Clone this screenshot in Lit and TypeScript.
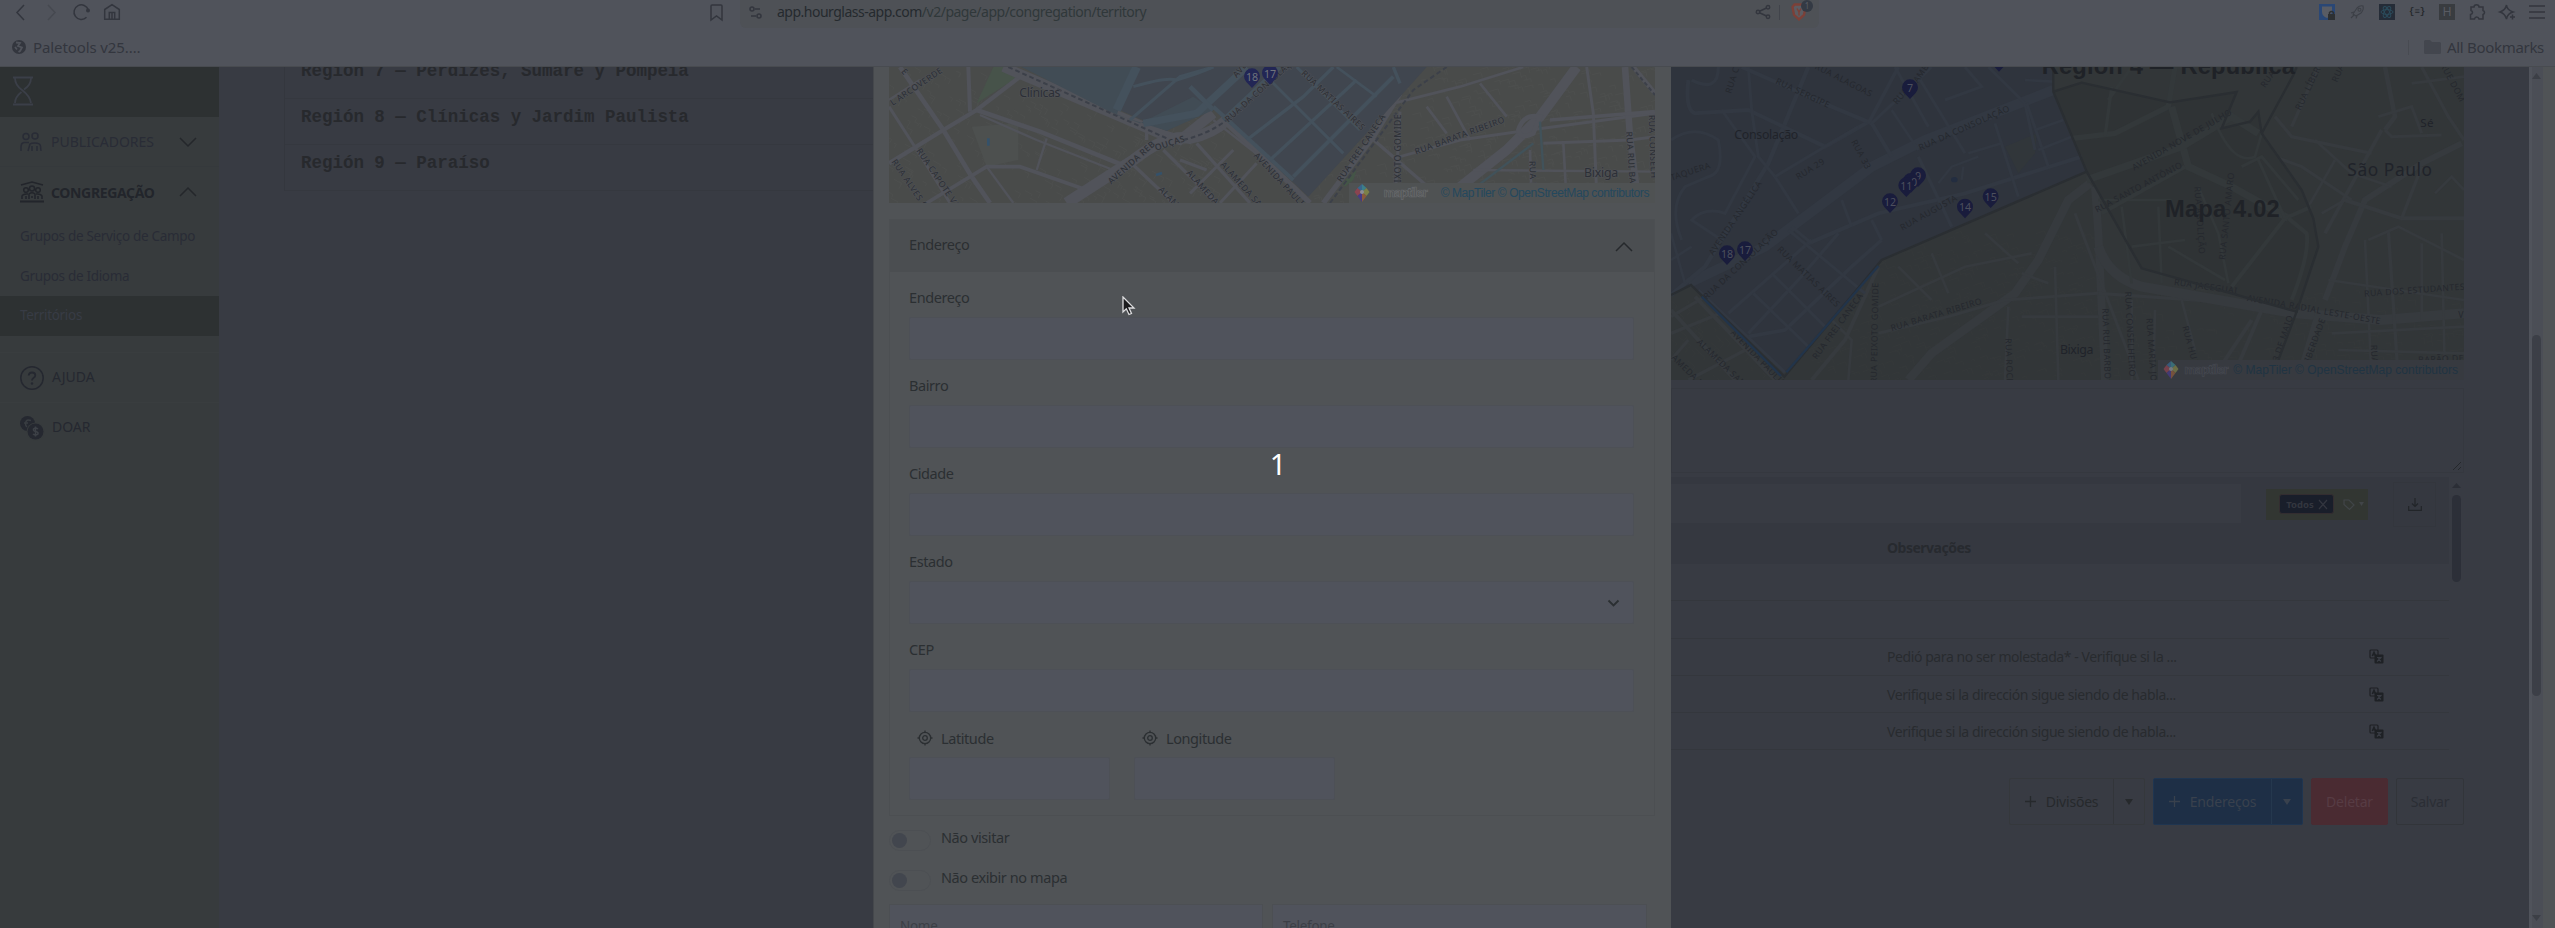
import { LitElement, html, svg, css } from "lit";
import { customElement } from "lit/decorators.js";

type Label = [string, number, number, number, number?];
type Road = [string, number];

const pin = (n: string, x: number, y: number) => svg`
  <g transform="translate(${x} ${y})">
    <path class="pin" d="M0 32 L-17 14 A24 24 0 1 1 17 14 Z"/>
    ${n ? svg`<text class="num" x="0" y="11" text-anchor="middle">${n}</text>` : ""}
  </g>`;

const label = ([t, x, y, r, s]: Label) => svg`
  <text class="street" font-size=${s ?? 26} transform="translate(${x} ${y}) rotate(${r})">${t}</text>`;

const road = ([d, w]: Road) => svg`<path class="road" d=${d} stroke-width=${w} />`;

function blocks(seed: number, x0: number, y0: number, x1: number, y1: number, n: number, a: number) {
  let s = seed;
  const rnd = () => ((s = (s * 16807) % 2147483647) / 2147483647);
  let d = "";
  const c = Math.cos(a), q = Math.sin(a);
  for (let i = 0; i < n; i++) {
    const x = x0 + rnd() * (x1 - x0), y = y0 + rnd() * (y1 - y0);
    const w = 8 + rnd() * 20, h = 6 + rnd() * 14;
    d += `M${x.toFixed(0)} ${y.toFixed(0)}l${(w * c).toFixed(0)} ${(w * q).toFixed(0)} ${(-h * q).toFixed(0)} ${(h * c).toFixed(0)}`;
  }
  return d;
}

const mapLogo = svg`
  <path d="M8 0 L3.500 4 L8 8 Z" fill="#39658c"/><path d="M8 0 L12.500 4 L8 8 Z" fill="#3c7f8a"/>
  <path d="M3.500 4 L0.500 8 L3.500 12 L8 8 Z" fill="#8a4450"/><path d="M12.500 4 L15.500 8 L12.500 12 L8 8 Z" fill="#7d8048"/>
  <path d="M3.500 12 L8 18 L8 8 Z" fill="#473a86"/><path d="M12.500 12 L8 18 L8 8 Z" fill="#8a5a3c"/><circle cx="8" cy="8" r="2" fill="#8b8d94"/>`;

@customElement("map-attribution")
class MapAttribution extends LitElement {
  static styles = css`
    :host { display: flex; align-items: center; justify-content: space-between; height: 20px; padding: 0 6px 1px 5px; box-sizing: border-box;
      font: 12px "Liberation Sans", Arial, sans-serif; color: var(--link); background: var(--attr-bg); white-space: nowrap; }
    svg { flex: none; width: 16px; height: 18px; opacity: var(--logo-op, 1); }
    .brand { font: bold 12.500px Inter, sans-serif; letter-spacing: -0.9px; color: var(--attr-bg); -webkit-text-stroke: 0.7px var(--brand); }
  `;
  render() {
    return html`<svg viewBox="0 0 16 18">${mapLogo}</svg><span class="brand">maptiler</span>
      <span>© MapTiler © OpenStreetMap contributors</span>`;
  }
}

@customElement("address-map")
class AddressMap extends LitElement {
  static styles = css`
    :host { display: block; position: relative; height: 136px; }
    svg { display: block; width: 100%; height: 100%; }
    .road { fill: none; stroke: #51535a; }
    .blue .road { stroke: #44515c; }
    .bld { fill: none; stroke: #4d4f4e; stroke-width: 3; }
    .street { font-family: "Noto Sans", sans-serif; font-weight: 500; fill: #2e3138; stroke: #505257; stroke-width: 3; paint-order: stroke; letter-spacing: 1.2px; }
    .place { font-family: "Noto Sans", sans-serif; fill: #2c2f36; stroke: #505257; stroke-width: 3; paint-order: stroke; }
    .pin { fill: #222655; } .num { font: 32px "Noto Sans", sans-serif; fill: #70737c; }
    map-attribution { position: absolute; right: 0; bottom: 0; width: 306px; --link: #24485e; --attr-bg: #4f5253; --brand: #67696c; }
  `;
  render() {
    const roads: Road[] = [
      ["M27 140 L130 300 L210 429", 9], ["M60 21 L190 210 L275 350 L330 429", 14], ["M27 310 L190 210 L290 150 L420 50", 13],
      ["M265 21 L270 155", 12], ["M120 60 L27 120", 8], ["M290 150 L480 215 L740 320", 14], ["M300 165 L470 240 L700 330", 7],
      ["M140 429 L320 320 L420 320 L620 390", 11], ["M320 320 L400 429", 7], ["M500 235 L470 330", 7], ["M800 240 L800 195", 10],
      ["M370 21 L850 225 L900 240 L1000 160", 30], ["M560 429 L760 300 Q860 220 930 235 Q1000 220 1040 180", 34],
      ["M760 315 L880 429", 10], ["M850 270 L1010 429", 10], ["M950 250 L1110 429", 10], ["M1040 190 L1290 429", 16],
      ["M1060 270 L930 400 M1130 310 L1020 429 M980 330 L900 300", 9], ["M1000 180 L1140 290 L1260 400", 7],
      ["M1560 100 L1480 230 L1330 429", 16], ["M1470 230 L1620 360 L1700 429", 10], ["M1560 155 L1545 429", 9],
      ["M1540 130 L1740 80 L1930 21", 8], ["M1560 290 L1740 240 L1950 210 L2325 160", 9], ["M1700 110 L1770 240 M1800 70 L1880 170 M1640 140 L1700 220", 8],
      ["M2090 21 L1980 170 L1880 270 L1680 429", 30], ["M1980 170 Q1930 160 1915 210 Q1920 240 1960 220 Z", 14],
      ["M2235 21 L2250 230 L2275 429", 20], ["M2120 21 L2140 160 L2150 400", 9], ["M2010 180 L2325 155", 11], ["M1990 250 L2250 240 L2325 230", 9],
      ["M1950 270 L1955 429 M2050 250 L2060 429", 8], ["M1780 330 L2325 335", 7], ["M2260 21 L2325 100", 14],
    ];
    const inner: Road[] = [
      ["M770 21 L710 150", 26], ["M750 180 L900 50 L1000 21", 9], ["M760 80 Q860 50 890 60 Q960 40 1000 21", 9], ["M790 190 L950 160 L1100 21", 22],
      ["M930 80 L1000 150", 14], ["M1030 180 L1200 21", 14], ["M1000 140 L1240 360", 12], ["M1100 240 L1270 110 L1360 21", 10],
      ["M1170 300 L1430 60", 10], ["M1240 350 L1540 50", 12], ["M1160 50 L1390 280", 9], ["M1250 21 L1440 210", 9], ["M1370 21 L1490 110", 8], ["M1540 21 L1560 70", 10],
    ];
    const labels: Label[] = [
      ["L ARCOVERDE", 38, 138, -34], ["E", 62, 35, 50], ["RUA ALVES GUIM", 34, 305, 56], ["RUA CAPOTE VALENTE", 108, 272, 56],
      ["AVENIDA REB", 694, 374, -42], ["OUÇAS", 828, 272, -18], ["ALAMEDA L", 918, 340, 48], ["ALAMEDA SANTOS", 1020, 315, 48], ["ALAM", 834, 390, 46],
      ["AVENIDA PAULISTA", 1120, 288, 47], ["RUA DA CONSOLAÇÃO", 1045, 188, -42], ["AVE", 1070, 55, -50], ["RUA MATIAS AIRES", 1262, 42, 43],
      ["RUA FREI CANECA", 1384, 368, -56], ["PEIXOTO GOMIDE", 1562, 400, -90], ["RUA BARATA RIBEIRO", 1608, 284, -20],
      ["RUA RUI BARBOSA", 2238, 215, 86], ["RUA CONSELH", 2306, 165, 88], ["RUA R", 1948, 303, 88],
    ];
    return html`
      <svg viewBox="27 21 2298 408" preserveAspectRatio="none">
        <rect x="27" y="21" width="2298" height="408" fill="#494b4a"/>
        <path class="bld" d=${blocks(7, 27, 21, 1040, 429, 330, 0.5)}/>
        <path class="bld" d=${blocks(91, 1300, 21, 2325, 429, 400, -0.25)}/>
        <path d="M290 130 L340 21 L390 21 L415 50 Z" fill="#47534a"/>
        <path d="M275 200 L415 190 L415 300 L320 320 Z" fill="#4d504f"/>
        <path d="M1385 370 L1430 330 L1420 360 L1395 380 Z" fill="#445547"/>
        ${roads.map(road)}
        <path d="M425 21 L1640 21 L1560 110 L1285 410 L1000 140 L860 212 Z" fill="#40464f"/>
        <path d="M425 21 L760 21 L710 165 L860 212 L1000 150 L940 110 L780 190 L690 155 Z" fill="#414c55"/>
        <g class="blue">${inner.map(road)}</g>
        <path d="M385 21 L860 235 M910 240 Q990 220 1040 180 M1350 429 L1600 90 L1700 21" stroke="#3c4049" stroke-width="6" stroke-dasharray="14 9" fill="none"/>
        <path d="M2255 21 L2325 105" stroke="#3c4049" stroke-width="6" stroke-dasharray="12 8" fill="none"/>
        <path d="M1980 185 L1990 330 M1960 250 L1750 410" stroke="#41525a" stroke-width="7" fill="none"/>
        <path d="M325 235 v22 M828 345 l18 -6" stroke="#34516a" stroke-width="8"/>
        ${labels.map(label)}
        <text class="place" x="418" y="110" font-size="37" textLength="123">Clínicas</text>
        <text class="place" x="2112" y="350" font-size="37" textLength="102">Bixiga</text>
        ${pin("18", 1116, 52)} ${pin("17", 1170, 42)}
      </svg>
      <map-attribution></map-attribution>`;
  }
}

@customElement("territory-map")
class TerritoryMap extends LitElement {
  static styles = css`
    :host { display: block; position: relative; height: 313px; }
    svg { display: block; width: 100%; height: 100%; }
    .road { fill: none; stroke: #363a3e; }
    .in .road { stroke: #323842; }
    .mid .road { stroke: #33383a; }
    .bld { fill: none; stroke: #35393a; stroke-width: 2.500; }
    .edge { fill: none; stroke: #2a2e32; stroke-width: 7; }
    .street { font-family: "Noto Sans", sans-serif; fill: #25282e; letter-spacing: 1.4px; }
    .place { font-family: "Noto Sans", sans-serif; fill: #20232a; }
    .big { font: bold 71px "Liberation Sans", Arial, sans-serif; fill: #1f2227; }
    .pin { fill: #191c3c; } .num { font: 32px "Noto Sans", sans-serif; fill: #4c4f5c; }
    map-attribution { position: absolute; right: 0; bottom: 0; width: 306px; --link: #203443; --attr-bg: #373a40; --brand: #454850; --logo-op: 0.75; }
  `;
  render() {
    const outside: Road[] = [
      ["M730 1140 L800 1060 L1050 880 L1120 780 L1210 600 L1275 550", 26], ["M1290 560 L1300 700 L1320 1140", 24],
      ["M18 950 L120 890 M18 1000 L190 930 M70 1140 L260 1040 M18 1080 L70 1020", 10], ["M90 890 L330 1140 M18 930 L210 1140", 12],
      ["M640 1000 L850 950 L1020 900 L1300 880", 9], ["M640 920 L900 800 L1100 760", 8], ["M700 800 L800 900 M800 760 L850 880 M960 700 L1060 790", 8],
      ["M1070 950 L1300 950 M1030 920 L1020 1140", 8], ["M1170 800 L1180 1140 M1070 820 L1150 850", 8], ["M440 1140 L540 1020 L640 800", 12],
      ["M500 960 L560 1020 L550 1140", 8], ["M1230 640 L1260 720 L1420 1140", 9], ["M1300 880 L1880 920", 10],
      ["M1300 740 Q1330 830 1430 860 L1890 940 L2150 960 L2397 940", 30], ["M1400 900 L1400 1140 M1470 930 L1465 1140 M1550 900 L1590 1050", 8],
      ["M1790 930 L1700 1140 M1640 1140 L1760 960", 12], ["M1960 940 L1900 1140", 20], ["M2390 430 L2270 490 L2100 600 L2040 740 L1980 900", 18],
      ["M2040 600 L2210 655 L2397 655", 12], ["M1800 460 L1910 500 L2060 600", 9], ["M1830 350 L1880 410 L2120 460", 10], ["M2160 201 L2190 350 L2160 390", 14],
      ["M2150 390 L2040 590 L1980 700", 11], ["M2160 390 L2180 410 L2330 405", 9], ["M2270 201 L2350 350 L2397 420", 10], ["M2240 250 L2397 230", 8],
      ["M1880 380 L1960 201", 10], ["M1950 420 L2060 520 L2180 560", 8], ["M2210 655 L2270 500 M2170 690 L2200 1140", 10], ["M2100 720 L2120 1140 M2270 730 L2270 960 M2330 700 L2340 1140", 8],
      ["M2110 720 L2200 680 L2397 780", 8], ["M1990 840 L2397 900 M2000 1000 L2397 980 M2020 1050 L2397 1060", 8], ["M1970 640 L2040 600 M2010 480 L1930 620", 8],
      ["M2140 350 L2240 320 L2270 400", 9], ["M2310 580 L2360 530 L2397 570", 8],
    ];
    const central: Road[] = [
      ["M1180 420 L1350 400 L1510 320 L1530 201", 16], ["M1520 320 L1570 500 L1700 560 L1870 655", 22], ["M1265 540 L1550 440 L1700 350 L1780 400", 22],
      ["M1330 300 L1400 201 M1340 260 L1320 410", 10], ["M1300 600 L1520 600 M1370 620 L1400 850", 8], ["M1480 620 L1490 850 M1600 560 L1660 700 L1690 850", 8],
      ["M1700 860 L1860 655 L1940 620", 12], ["M1780 480 L1860 655 M1730 500 L1790 470 L1900 600", 9], ["M1510 740 L1680 840 M1400 740 L1560 720", 8], ["M1560 500 L1310 640", 12],
      ["M1880 900 Q1935 760 1925 700 L1870 655", 12], ["M1640 340 Q1700 500 1770 470 L1790 400", 8],
    ];
    const inner: Road[] = [
      ["M70 850 L300 740 L620 500 L780 420 L1165 270", 30], ["M18 885 L120 800 L310 490 L430 201", 13], ["M430 730 L640 640 L900 580 L1250 470", 12],
      ["M650 720 L560 800 L360 990 L250 1010", 11], ["M100 870 L360 1117", 9], ["M190 940 L440 720", 10], ["M250 1000 L400 840 L520 700", 10], ["M265 880 L430 1040 M320 820 L480 980 M370 690 L600 880", 9],
      ["M18 420 Q90 370 160 420 Q180 520 130 530 L60 560 Q10 620 50 720", 9], ["M70 240 Q60 330 90 340 L250 330 L480 440 L620 360", 12], ["M80 240 Q160 280 160 201", 10], ["M170 330 L270 470 L180 640 Q120 620 80 660 L170 720", 9],
      ["M250 201 L260 330 L280 470 L330 530 L400 640", 9], ["M230 201 L500 320 L620 370 L680 470", 12], ["M330 530 L580 380", 9], ["M610 370 L700 201", 11], ["M620 370 L800 201", 9],
      ["M690 201 L790 380 M760 230 L900 460 M840 300 L950 260 L900 201", 9], ["M760 470 L860 680", 10], ["M970 201 L1080 310 L1110 450 M990 370 L1060 590", 9], ["M1085 310 L1150 500", 9],
      ["M1080 240 L1165 245", 8], ["M1110 390 L1195 360 M1120 450 L1220 410", 8], ["M530 600 L560 680 M620 660 L650 720 M380 680 L440 730", 9], ["M680 330 L760 450 M910 460 L1010 430", 8], ["M820 550 L860 500 L940 470 M895 500 L890 540", 7],
      ["M18 700 L60 850 M18 780 L80 740", 8],
    ];
    const labels: Label[] = [
      ["RUA CUBA", 198, 282, -72], ["RUA ALAGOAS", 448, 205, 27], ["RUA SERGIPE", 330, 250, 25], ["RUA", 696, 315, -50], ["AMBI", 758, 250, -55], ["RUA DA CONSOLAÇÃO", 766, 452, -24],
      ["RUA 29", 400, 540, -32], ["RUA 33", 558, 425, 62], ["TAQUERA", 20, 542, -18], ["AVENIDA ANGÉLICA", 145, 768, -56], ["RUA DA CONSOLAÇÃO", 125, 900, -43],
      ["RUA MATIAS AIRES", 335, 750, 44], ["RUA AUGUSTA", 712, 692, -29], ["RUA FREI CANECA", 455, 1080, -54], ["RUA PEIXOTO GOMIDE", 635, 1150, -89], ["RUA BARATA RIBEIRO", 680, 994, -17],
      ["ALAMEDA SANTOS", 94, 1028, 44], ["AMEDA LORENA", 18, 1075, 44], ["AVENIDA PAULISTA", 196, 1000, 46], ["RUA ROCHA", 1021, 1015, 88], ["RUA RUI BARBOSA", 1312, 925, 88],
      ["RUA CONSELHEIRO R", 1380, 875, 87], ["RUA MARIA JO", 1444, 955, 86], ["RUA HUMA", 1552, 980, 75], ["AVENIDA NOVE DE JULHO", 1408, 512, -30], ["RUA SANTO ANTÔNIO", 1296, 638, -28],
      ["RUA JACEGUAI", 1526, 855, 8], ["AVENIDA RADIAL LESTE-OESTE", 1745, 902, 10], ["RUA DOS ESTUDANTES", 2098, 890, -4], ["RUA SANTO AMARO", 1680, 780, -84], ["RUA ABOLIÇÃO", 1588, 560, 86],
      ["RUA LÍBERO", 1906, 332, -64], ["RUA", 2016, 248, -66], ["RUA", 1800, 265, -55], ["RUE DOM", 2325, 195, 62], ["LIBERDADE", 1930, 1100, -70], ["3 DE MAIO", 1840, 1085, -72], ["RUA", 2117, 1035, 86], ["BARÃO DE", 2260, 1088, -2], ["V", 2380, 955, 0],
    ];
    return html`
      <svg viewBox="18 201 2379 939" preserveAspectRatio="none">
        <rect x="18" y="201" width="2379" height="939" fill="#323638"/>
        <path class="bld" d=${blocks(11, 430, 700, 1300, 1140, 420, -0.35)}/>
        <path class="bld" d=${blocks(23, 1300, 860, 2397, 1140, 230, -0.1)}/>
        <path class="bld" d=${blocks(5, 18, 880, 330, 1140, 70, 0.7)}/>
        ${outside.map(road)}
        <path d="M1165 275 L1250 248 L1515 307 L1715 276 L1670 385 L1755 365 L1780 335 L1790 400 L1910 570 L1945 655 L1960 740 L1895 935 L1430 805 L1265 515 Z" fill="#2f3335"/>
        <g class="mid">${central.map(road)}</g>
        <path d="M18 201 H1165 V275 L1265 515 L650 780 L358 1117 L78 855 L18 885 Z" fill="#2f343d"/>
        <path d="M1020 440 L1115 400 L1110 460 L1060 520 Z" fill="#31363a"/>
        <g class="in">${inner.map(road)}</g>
        <ellipse cx="868" cy="539" rx="10" ry="8" fill="#232d40"/>
        ${labels.map(label)}
        <path class="edge" d="M18 885 L78 855 L358 1130 L650 780 L1265 515 L1165 275 V201"/>
        <path class="edge" d="M1165 275 L1250 248 L1515 307 L1715 276 L1670 385 L1755 365 L1780 335 L1790 400 L1910 570 L1945 655 L1960 740 L1895 935 L1430 805 L1265 515"/>
        <path class="edge" d="M1790 400 L1885 225 L1895 201 M1895 935 L1840 1080"/>
        <path d="M110 890 L348 1128 M364 1117 L640 798" stroke="#22344a" stroke-width="7" fill="none"/>
        <text class="place" x="208" y="416" font-size="37" textLength="192">Consolação</text>
        <text class="place" x="1185" y="1061" font-size="37" textLength="100">Bixiga</text>
        <text class="place" x="2266" y="381" font-size="35" textLength="40">Sé</text>
        <text class="place" x="2047" y="529" font-size="52" textLength="254">São Paulo</text>
        <text class="big" x="1500" y="651" textLength="344">Mapa 4.02</text>
        <text class="big" x="1130" y="222" textLength="760">Región 4 — República</text>
        ${pin("7", 735, 265)} ${pin("", 1002, 183)} ${pin("9", 759, 529)} ${pin("10", 738, 546)} ${pin("11", 724, 559)} ${pin("12", 675, 607)}
        ${pin("14", 900, 623)} ${pin("15", 977, 592)} ${pin("17", 240, 751)} ${pin("18", 186, 763)}
      </svg>
      <map-attribution></map-attribution>`;
  }
}

const icon = (w: number, h: number, body: unknown, cls = "") =>
  html`<svg class="ic ${cls}" width=${w} height=${h} viewBox="0 0 ${w} ${h}">${body}</svg>`;
const chevron = (up: boolean) => icon(18, 10, svg`<path d=${up ? "M1 9 L9 1 L17 9" : "M1 1 L9 9 L17 1"}/>`, "chev");
const caret = icon(8, 6, svg`<path class="f" d="M0 0H8L4 6Z"/>`, "caret");
const plus = icon(11, 11, svg`<path d="M5.500 0V11M0 5.500H11"/>`, "plus");
const target = icon(16, 16, svg`<circle cx="8" cy="8" r="5.700"/><circle cx="8" cy="8" r="2.300"/><path d="M8 .5V3M8 13V15.500M.5 8H3M13 8H15.500"/>`, "target");
const translate = icon(15, 15, svg`<rect x="1" y="1" width="8" height="8" rx="1"/><rect class="f" x="5.500" y="5.500" width="9" height="9" rx="1"/><path d="M3.200 7L5 3L6.800 7M3.800 5.800H6.200"/><path class="cut" d="M8 12.500L12.500 8M8 8.500H12.500M9 9.500L12 12.500"/>`, "trans");

@customElement("app-root")
class AppRoot extends LitElement {
  static styles = css`
    :host { display: grid; grid-template-rows: 67px 861px; width: 2555px; height: 928px; overflow: hidden; position: relative;
      background: #383b43; font-family: "Noto Sans", "Open Sans", sans-serif; font-size: 14px; color: #2a2d33; }
    * { box-sizing: border-box; }
    .ic { display: block; flex: none; fill: none; stroke: currentColor; stroke-width: 1.500; overflow: visible; }
    .f { fill: currentColor; stroke: none; }

    .chrome { display: grid; grid-template-rows: 28px 38px; background: #50535b; border-bottom: 1px solid #484b50; color: #33363e; }
    .bar { display: grid; grid-template-columns: 740px 1079px 1fr; }
    .nav { display: flex; align-items: center; padding: 0 17px 4px 16px; }
    .nav .back { margin-right: 22px; } .nav .fwd { margin-right: 17px; color: #464950; } .nav .rel { margin-right: 14px; }
    .nav .mark { margin-left: auto; }
    .url { display: flex; align-items: center; padding: 0 10px 4px 9px; background: #4e5156; border-radius: 0 0 6px 6px; }
    .url .addr { margin-left: 15px; font-size: 14px; letter-spacing: -0.5px; line-height: 20px; color: #30383a; }
    .url .addr b { font-weight: 400; color: #252a2e; }
    .url .share { margin-left: auto; margin-right: 9px; }
    .sep { width: 1px; height: 15px; background: #41444b; }
    .shield { position: relative; margin-left: 11px; margin-right: 2px; }
    .count { position: absolute; left: 10px; top: -3px; width: 12px; height: 12px; border-radius: 50%; background: #343a44; color: #595c64; font-size: 8px; line-height: 12px; text-align: center; }
    .ext { display: flex; align-items: center; justify-content: flex-end; gap: 14px; padding: 0 10px 4px 0; }
    .sq { width: 16px; height: 16px; display: grid; place-items: center; font: 12px "Liberation Sans", sans-serif; }
    .sq.h { background: #393c40; color: #585b62; } .sq.atom { background: #252c37; color: #2b4c5c; } .sq.br { font: bold 9px "Liberation Mono", monospace; color: #26292d; }
    .marks { display: flex; align-items: center; padding: 0 11px 0 12px; font-size: 15px; }
    .marks .pal { margin-left: 7px; letter-spacing: -0.1px; }
    .marks .line { margin-left: auto; width: 1px; height: 15px; background: #484b52; margin-right: 15px; }
    .marks .all { margin-left: 6px; letter-spacing: -0.3px; }

    .page { display: grid; grid-template-columns: 219px 1fr 26px; min-height: 0; overflow: hidden; }
    .side { background: #373b3d; color: #292c36; display: flex; flex-direction: column; }
    .logo { height: 50px; background: #2d3132; padding: 9px 12px; color: #3b3f48; }
    .top { display: flex; align-items: center; height: 50px; padding: 0 22px 0 20px; border-bottom: 1px solid #35393c; }
    .top span { margin-left: 9px; font-size: 14px; letter-spacing: 0; white-space: nowrap; padding-bottom: 1px; }
    .top .chev { margin-left: auto; color: #24272b; }
    .top.open { border: 0; color: #22252b; } .top.open span { margin-left: 7px; font-weight: 700; letter-spacing: -0.35px; padding-bottom: 0; }
    .sub { height: 39.500px; line-height: 38px; padding-left: 20px; font-size: 13.500px; letter-spacing: -0.32px; white-space: nowrap; }
    .sub.on { height: 40px; background: #2d3132; color: #383c45; margin-bottom: 16px; }
    .top.foot { border: 0; border-top: 1px solid #393d3f; color: #252830; } .top.foot span { margin-left: 8px; padding-bottom: 2px; }

    .content { display: grid; grid-template-columns: 1452px 793px; overflow: hidden; }
    .list { margin-left: 65px; height: 124px; border-left: 1px solid #34373e; display: grid; grid-template-rows: 32px 46px 46px; overflow: hidden;
      font: bold 17.500px "Liberation Mono", monospace; color: #27292d; }
    .list div { border-bottom: 1px solid #35383f; padding-left: 16px; display: flex; align-items: center; padding-bottom: 9px; white-space: nowrap; letter-spacing: -0.02px; }
    .list div:first-child { align-items: flex-end; padding-bottom: 17px; }

    .note { height: 85px; margin-top: 8px; border: 1px solid #35383f; display: flex; align-items: flex-end; justify-content: flex-end; padding: 2px; color: #25282c; }
    .scrollbox { display: grid; grid-template-columns: 778px 15px; height: 284px; margin-top: 4px; overflow: hidden; }
    .tools { display: flex; align-items: center; height: 54px; background: #353840; }
    .tools .search { width: 570px; height: 39px; background: #383b43; margin-top: -2px; }
    .tag { margin-left: 25px; width: 102px; height: 31px; background: #323632; display: flex; align-items: center; padding: 0 4px 0 13px; color: #414548; }
    .badge { width: 55px; height: 20px; border-radius: 3px; background: #191e2a; border: 1px solid #332d30; color: #33363f; display: flex; align-items: center; justify-content: center; gap: 5px; font-size: 9.500px; font-weight: 700; }
    .tag .tg { margin-left: 9px; } .tag .caret { margin-left: auto; }
    .down { margin-left: 25px; width: 43px; height: 45px; border: 1px solid #33363d; display: grid; place-items: center; color: #222529; }
    .head { height: 33px; background: #353840; padding: 5px 0 0 216px; font-weight: 700; font-size: 14px; letter-spacing: -0.5px; line-height: 24px; color: #272a2f; }
    .row { height: 37.300px; border-bottom: 1px solid #34373d; display: flex; align-items: center; padding: 0 65px 0 216px; justify-content: space-between; letter-spacing: -0.42px; color: #282b2f; white-space: nowrap; }
    .row .trans { color: #1e2125; stroke-width: 1.200; } .cut { stroke: #383b43; }
    .track { display: flex; flex-direction: column; align-items: center; color: #2b2e36; padding-top: 6px; }
    .thumb { width: 9px; border-radius: 5px; background: #2c2f38; margin-top: 7px; height: 87px; }
    .bot { margin-top: auto; margin-bottom: 7px; }
    .actions { display: flex; justify-content: flex-end; gap: 8px; margin-top: 17px; }
    .btn { display: flex; height: 47px; border: 1px solid #35383c; border-radius: 2px; align-items: stretch; color: #26292c; letter-spacing: -0.2px; }
    .btn > * { display: flex; align-items: center; justify-content: center; }
    .btn .plus { margin-right: 10px; stroke-width: 1.300; }
    .btn .arrow { width: 31px; border-left: 1px solid #32353a; }
    .div { width: 136px; } .end { width: 150px; background: #1e2f46; border-color: #1f3550; color: #39414d; }
    .btn .t { flex: 1; }
    .end .arrow { border-color: #25384e; }
    .del { width: 77px; background: #4a2b32; border-color: #4a2b32; color: #573c44; } .sav { width: 68px; border-color: #32353a; color: #2b2e35; }

    .pagebar { background: linear-gradient(90deg, #50535b 0 3px, #4b4e56 3px 14px, #505356 14px); display: flex; flex-direction: column; align-items: flex-start; padding: 6px 0 0 3px; color: #3c3f46; }
    .pagebar .thumb { height: 361px; margin-top: 256px; background: #3c3f47; }

    .modal { position: absolute; left: 873px; top: 67px; width: 798px; height: 861px; background: #505356; border-left: 1px solid #45484c; padding: 0 16px 0 15px; overflow: hidden; color: #2b2f32; font-size: 14.500px; letter-spacing: -0.42px; }
    .acc { margin-top: 16px; border: 1px solid #4c4f52; height: 597px; }
    .acch { height: 52px; background: #4b4e51; display: flex; align-items: center; justify-content: space-between; padding: 0 22px 4px 19px; }
    .acch .chev { margin-top: 6px; color: #26292c; }
    .form { padding: 15px 20px 0 19px; display: grid; grid-auto-rows: 88px; }
    .fld { display: grid; grid-template-rows: 22px 43px; row-gap: 8px; line-height: 20px; }
    .inp { background: #50535c; border: 1px solid #4d5056; border-radius: 2px; display: flex; align-items: center; justify-content: flex-end; padding-right: 14px; }
    .geo { display: grid; grid-template-columns: 201px 201px; column-gap: 24px; }
    .geo .cap { display: flex; align-items: center; gap: 8px; padding-left: 8px; }
    .target { stroke-width: 1.300; }
    .togs { padding-top: 11px; }
    .tog { display: flex; height: 39.500px; gap: 10px; }
    .sw { width: 42px; height: 21px; border: 1px solid #4c4f53; border-radius: 11px; padding: 2px; margin-top: 3px; }
    .sw i { display: block; width: 15px; height: 15px; border-radius: 50%; background: #42464e; }
    .two { display: grid; grid-template-columns: 374px 375px; gap: 9px; margin-top: -2px; }
    .two div { height: 60px; background: #50535c; border: 1px solid #4c4f53; padding: 11px 10px; font-size: 13.500px; letter-spacing: -0.3px; line-height: 20px; color: #3c3f46; }
    .count-down { position: absolute; left: 1258px; top: 444px; width: 40px; text-align: center; font-size: 29px; line-height: 40px; color: #fff; }
    .cursor { position: absolute; left: 1122px; top: 296px; }
  `;

  render() {
    const people = icon(22, 20, svg`<circle cx="6" cy="4.500" r="3"/><circle cx="15" cy="4" r="3"/><path d="M1 19 V15 Q1 11 4 10.500 H9 M8 19 L10 12 Q11 11 15 11 Q20 11 20.500 14 L21 19 M12 14 V19 M17 14 V19"/>`);
    const hall = icon(24, 22, svg`<path d="M1 4 L12 1 L23 4"/><circle cx="6" cy="9" r="2.300"/><circle cx="12" cy="7.500" r="2.500"/><circle cx="18" cy="9" r="2.300"/><path d="M2 18 V15 Q3 12.500 8 13 M22 18 V15 Q21 12.500 16 13 M9 18 V13 Q12 10.500 15 13 V18 M6 15 V18 M12 15 V17 M18 15 V18"/><path d="M0 20.500 H24" stroke-width="2"/>`);
    return html`
      <div class="chrome">
        <div class="bar">
          <div class="nav">
            ${icon(9, 15, svg`<path d="M8 0 L1 7.500 L8 15"/>`, "back")}
            ${icon(9, 15, svg`<path d="M1 0 L8 7.500 L1 15"/>`, "fwd")}
            ${icon(17, 16, svg`<path d="M13.500 13.300 A7.300 7.300 0 1 1 15.300 6"/><circle class="f" cx="15" cy="6.500" r="2"/>`, "rel")}
            ${icon(16, 16, svg`<path d="M.7 5.500 L8 .7 L15.300 5.500 V15.300 H.7 Z M5.300 15 V8.500 H10.700 V15 M8 8.500V15"/>`)}
            ${icon(13, 17, svg`<path d="M1 2 Q1 1 2 1 H11 Q12 1 12 2 V16 L6.500 12 L1 16 Z"/>`, "mark")}
          </div>
          <div class="url">
            ${icon(13, 13, svg`<circle cx="3" cy="3" r="2"/><path d="M6 3H11M2 10H7"/><circle cx="10" cy="10" r="2"/>`)}
            <span class="addr"><b>app.hourglass-app.com</b>/v2/page/app/congregation/territory</span>
            ${icon(14, 14, svg`<circle cx="2" cy="7" r="1.700"/><circle cx="12" cy="2.300" r="1.700"/><circle cx="12" cy="11.700" r="1.700"/><path d="M3.500 6.300L10.500 3M3.500 7.700L10.500 11"/>`, "share")}
            <span class="sep"></span>
            <span class="shield"><svg class="ic" width="16" height="18" viewBox="0 0 16 18"><path d="M8 1.500 L3.500 1.500 L1.500 4 L3 12 L8 16.500 L13 12 L14.500 4 L12.500 1.500 Z" fill="#5c5c62" stroke="#7c4038" stroke-width="2.400"/><path d="M6 5.500 L8 9 L10 5.500 M8 9 V12.500" stroke="#7c4038"/></svg><span class="count">1</span></span>
          </div>
          <div class="ext">
            ${icon(16, 16, svg`<rect width="16" height="16" fill="#2a4775" stroke="none"/><path d="M3 2.500H13V8Q12 12 8 14Q3 12 3 8Z" fill="#595c64" stroke="none"/><rect x="9" y="10" width="7" height="6" fill="#2d3033" stroke="none"/><path d="M10.500 10V8.500Q12.500 6.500 14.500 8.500V10" stroke="#2d3033"/>`)}
            ${icon(16, 14, svg`<g stroke="#3d4047" stroke-width="1.100"><path d="M4 9 L8 3 Q11 0 14 1 Q15 5 12 8 L7 11 Z"/><path d="M5 7 L2 8 M8 11 L7 13.500 M2 13 L5 10"/><circle cx="10.500" cy="4.800" r="1.500"/></g>`)}
            <span class="sq atom">${icon(14, 14, svg`<g stroke-width="1"><ellipse cx="7" cy="7" rx="6" ry="2.400"/><ellipse cx="7" cy="7" rx="6" ry="2.400" transform="rotate(60 7 7)"/><ellipse cx="7" cy="7" rx="6" ry="2.400" transform="rotate(120 7 7)"/></g>`)}</span>
            <span class="sq br">{≡}</span>
            <span class="sq h">H</span>
            ${icon(16, 16, svg`<path d="M2 3H5Q5 .7 7.500 .7 Q10 .7 10 3 H14 V6.500 Q15.500 7 15.500 8.500 Q15.500 10 14 10.500 V15 H10 Q9.500 13 7.500 13 Q6 13 5.500 15 H1.500 V10.500 Q3.500 10 3.500 8.500 Q3.500 7 2 6.500 Z"/>`)}
            ${icon(16, 16, svg`<path d="M7.500 1 Q8 6 14 8 Q8.500 9.500 7.500 15 Q6 9.500 1 8 Q6.500 6 7.500 1 Z M13.500 10.500V15.500M11 13H16"/>`)}
            ${icon(16, 14, svg`<path d="M0 1H16M0 7H16M0 13H16"/>`)}
          </div>
        </div>
        <div class="marks">
          ${icon(14, 14, svg`<circle class="f" cx="7" cy="7" r="7"/><path d="M4 2.500 L8 3 L6 6 L10 7.500 L8 11 L6.500 12 M3 7 L5 9.500" stroke="#50535b" stroke-width="1.800"/>`)}
          <span class="pal">Paletools v25.…</span>
          <span class="line"></span>
          ${icon(17, 14, svg`<path d="M0 1.500 Q0 0 1.500 0 H6 L8 2 H15.500 Q17 2 17 3.500 V12.500 Q17 14 15.500 14 H1.500 Q0 14 0 12.500 Z" fill="#43464e" stroke="none"/>`)}
          <span class="all">All Bookmarks</span>
        </div>
      </div>

      <div class="page">
        <div class="side">
          <div class="logo">${icon(22, 30, svg`<path d="M1 1.500H21M1 28.500H21" stroke-width="2"/><path d="M3 2 Q3 9 10 14 Q18 20 19 27 M19 2 Q19 9 12 13.500 M9.500 16 Q3 21 3 27" stroke-width="1.800"/>`)}</div>
          <div class="top">${people}<span>PUBLICADORES</span>${chevron(false)}</div>
          <div class="top open">${hall}<span>CONGREGAÇÃO</span>${chevron(true)}</div>
          <div class="sub">Grupos de Serviço de Campo</div>
          <div class="sub">Grupos de Idioma</div>
          <div class="sub on">Territórios</div>
          <div class="top foot">${icon(24, 24, svg`<circle cx="12" cy="12" r="11.200"/><path d="M8.700 9.500 Q9 6.500 12 6.500 Q15.300 6.500 15.300 9.300 Q15.300 11 13.500 12 Q12 13 12 14.500" stroke-width="1.800"/><circle class="f" cx="12" cy="17.500" r="1.200"/>`)}<span>AJUDA</span></div>
          <div class="top foot">${icon(24, 24, svg`<circle class="f" cx="7.500" cy="7.500" r="7.500"/><path d="M11 4.500 Q6 2.500 5.500 7.500 Q5.500 10 7 11 M4 7H8" stroke="#393d42"/><circle cx="15.500" cy="15.500" r="9" fill="#373b3d" stroke="none"/><circle class="f" cx="15.500" cy="15.500" r="8"/><path d="M18 13 Q15.500 11 13.500 13 Q13 15 15.500 15.500 Q18.500 16 18 18 Q15.500 20 13 18 M15.500 10.500V20.500" stroke="#3d4147"/>`)}<span>DOAR</span></div>
        </div>

        <div class="content">
          <div class="list">
            <div>Región 7 — Perdizes, Sumaré y Pompeia</div>
            <div>Región 8 — Clínicas y Jardim Paulista</div>
            <div>Región 9 — Paraíso</div>
          </div>
          <div>${this.detail()}</div>
        </div>

        <div class="pagebar">
          ${icon(9, 6, svg`<path class="f" d="M0 6H9L4.500 0Z"/>`)}
          <div class="thumb"></div>
          ${icon(9, 6, svg`<path class="f" d="M0 0H9L4.500 6Z"/>`, "bot")}
        </div>
      </div>

      <div class="modal">
        <address-map></address-map>
        <div class="acc">
          <div class="acch"><span>Endereço</span>${icon(16, 8, svg`<path d="M0 8 L8 0 L16 8"/>`, "chev")}</div>
          <div class="form">
            ${["Endereço", "Bairro", "Cidade", "Estado", "CEP"].map((t) => html`
              <div class="fld"><span>${t}</span><div class="inp">${t === "Estado" ? icon(11, 6, svg`<path d="M.5 .5 L5.500 5.500 L10.500 .5" stroke-width="1.800"/>`) : ""}</div></div>`)}
            <div class="geo">
              ${["Latitude", "Longitude"].map((t) => html`<div class="fld"><span class="cap">${target}${t}</span><div class="inp"></div></div>`)}
            </div>
          </div>
        </div>
        <div class="togs">
          ${["Não visitar", "Não exibir no mapa"].map((t) => html`<div class="tog"><span class="sw"><i></i></span><span>${t}</span></div>`)}
        </div>
        <div class="two"><div>Nome</div><div>Telefone</div></div>
      </div>
      <div class="count-down">1</div>
      <svg class="cursor" width="14" height="20" viewBox="0 0 14 20"><path d="M1 1 V16 L4.300 12.800 L7 18.500 L9.500 17.500 L7 12 H12 Z" fill="#1c1c1e" stroke="#dcdcde" stroke-width="1.300"/></svg>
    `;
  }

  private detail() {
    const rows = ["", "", "Pedió para no ser molestada* - Verifique si la ...", "Verifique si la dirección sigue siendo de habla...", "Verifique si la dirección sigue siendo de habla...", "Verifique si la dirección sigue siendo de habla..."];
    return html`
      <territory-map></territory-map>
      <div class="note">${icon(8, 8, svg`<path d="M0 8L8 0M5 8L8 5" stroke-width="1"/>`)}</div>
      <div class="scrollbox">
        <div>
          <div class="tools">
            <div class="search"></div>
            <div class="tag"><span class="badge">Todos ${icon(8, 9, svg`<path d="M0 0L8 9M8 0L0 9" stroke-width="1.200"/>`)}</span>${icon(12, 11, svg`<path d="M1 1H6L11 6L6.500 10.500L1 5.500Z" stroke-width="1.200"/>`, "tg")}${icon(5, 4, svg`<path class="f" d="M0 0H5L2.500 4Z"/>`, "caret")}</div>
            <div class="down">${icon(14, 13, svg`<path d="M7 0V8M4 5.500L7 8.500L10 5.500M.7 8V12.300H13.300V8" stroke-width="1.200"/>`)}</div>
          </div>
          <div class="head">Observações</div>
          ${rows.map((t) => html`<div class="row"><span>${t}</span>${t ? translate : ""}</div>`)}
        </div>
        <div class="track">
          ${icon(9, 5, svg`<path class="f" d="M0 5H9L4.500 0Z"/>`)}
          <div class="thumb"></div>
          ${icon(9, 5, svg`<path class="f" d="M0 0H9L4.500 5Z"/>`, "bot")}
        </div>
      </div>
      <div class="actions">
        <div class="btn div"><span class="t">${plus}Divisões</span><span class="arrow">${caret}</span></div>
        <div class="btn end"><span class="t">${plus}Endereços</span><span class="arrow">${caret}</span></div>
        <div class="btn del"><span class="t">Deletar</span></div>
        <div class="btn sav"><span class="t">Salvar</span></div>
      </div>`;
  }
}
